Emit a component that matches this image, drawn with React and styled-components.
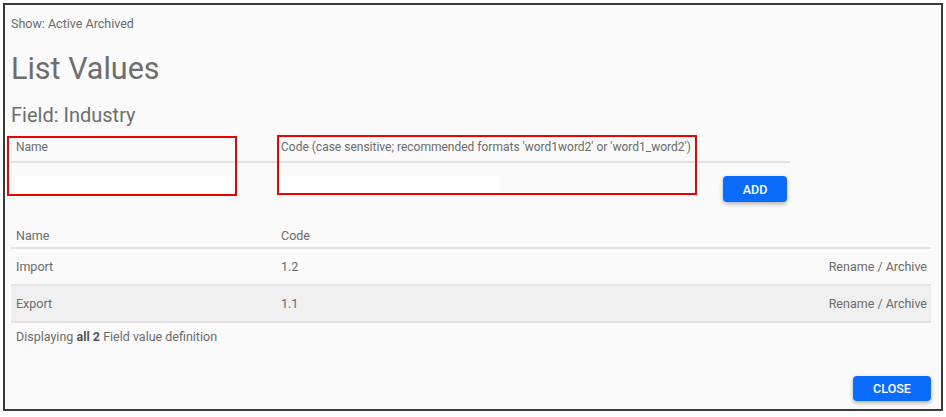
import React from 'react'
import styled, { createGlobalStyle } from 'styled-components'

const GlobalStyle = createGlobalStyle`
  body {
    margin: 0;
    background: #ffffff;
    font-family: Roboto, 'Liberation Sans', sans-serif;
  }
`

const Frame = styled.div`
  box-sizing: border-box;
  margin: 3px 0 0 3px;
  width: 940px;
  height: 408px;
  border: 2px solid #3a3a3a;
  background: #fafafa;
  padding: 11px 10px 8px 6px;
  display: flex;
  flex-direction: column;
  color: #6b6b6b;
  font-size: 12.5px;
`

const ShowLine = styled.div`
  line-height: 16px;
  font-size: 12.5px;
`

const Title = styled.h1`
  margin: 19px 0 0;
  font-size: 30.5px;
  font-weight: 400;
  line-height: 36px;
  color: #6e6e6e;
`

const SubTitle = styled.h2`
  margin: 16px 0 0;
  font-size: 20px;
  font-weight: 400;
  line-height: 24px;
  color: #6e6e6e;
`

const FormWrap = styled.div`
  position: relative;
  margin-top: 12px;
  width: 779px;
`

const LabelRow = styled.div`
  display: grid;
  grid-template-columns: 270px 1fr;
  line-height: 16px;
  font-size: 12px;
  padding-bottom: 6px;
  border-bottom: 2px solid #e2e2e2;
`

const Label = styled.div`
  padding-left: ${(p) => p.$indent || 0}px;
`

const InputRow = styled.div`
  display: flex;
  align-items: flex-start;
  margin-top: 13px;
`

const Input = styled.input`
  box-sizing: border-box;
  width: ${(p) => p.$width}px;
  height: 17px;
  margin-left: ${(p) => p.$left}px;
  border: none;
  background: #ffffff;
  outline: none;
`

const Button = styled.button`
  box-sizing: border-box;
  width: ${(p) => p.$width}px;
  height: 26px;
  border: none;
  border-radius: 4px;
  background: #0b6cfc;
  color: #ffffff;
  font-family: Roboto, 'Liberation Sans', sans-serif;
  font-size: 12.5px;
  font-weight: 500;
  text-transform: uppercase;
  box-shadow: 0 2px 4px rgba(0, 0, 0, 0.3);
  cursor: pointer;
`

const AddButton = styled(Button)`
  margin-left: auto;
  margin-right: 3px;
`

const Highlight = styled.div`
  position: absolute;
  box-sizing: border-box;
  left: ${(p) => p.$x}px;
  top: ${(p) => p.$y}px;
  width: ${(p) => p.$w}px;
  height: ${(p) => p.$h}px;
  border: 2px solid #ee0000;
  pointer-events: none;
`

const Table = styled.div`
  margin-top: 21px;
  width: 920px;
`

const Row = styled.div`
  display: grid;
  grid-template-columns: 270px 1fr auto;
  align-items: center;
  height: ${(p) => (p.$head ? 24 : 35)}px;
  border-bottom: 2px solid #e2e2e2;
  background: ${(p) => (p.$shade ? '#f0f0f0' : 'transparent')};
`

const Cell = styled.div`
  padding-left: ${(p) => (p.$first ? 5 : 0)}px;
  padding-right: ${(p) => (p.$end ? 4 : 0)}px;
`

const Summary = styled.div`
  margin-top: 6px;
  padding-left: 5px;
  line-height: 16px;

  b {
    font-weight: 700;
    color: #555;
  }
`

const Footer = styled.div`
  margin-top: auto;
  display: flex;
  justify-content: flex-end;
`

const CloseButton = styled(Button)`
  height: 25px;
`

const rows = [
  { name: 'Import', code: '1.2' },
  { name: 'Export', code: '1.1' },
]

const App = () => {
  return (
    <>
      <GlobalStyle />
      <Frame>
        <ShowLine>Show: Active Archived</ShowLine>
        <Title>List Values</Title>
        <SubTitle>Field: Industry</SubTitle>
        <FormWrap>
          <LabelRow>
            <Label $indent={5}>Name</Label>
            <Label>
              Code (case sensitive; recommended formats 'word1word2' or
              'word1_word2')
            </Label>
          </LabelRow>
          <InputRow>
            <Input $width={218} $left={4} />
            <Input $width={219} $left={48} />
            <AddButton $width={64}>Add</AddButton>
          </InputRow>
          <Highlight $x={-4} $y={-3} $w={230} $h={60} />
          <Highlight $x={266} $y={-4} $w={420} $h={60} />
        </FormWrap>
        <Table>
          <Row $head>
            <Cell $first>Name</Cell>
            <Cell>Code</Cell>
            <Cell $end />
          </Row>
          {rows.map((r, i) => (
            <Row key={r.name} $shade={i % 2 === 1}>
              <Cell $first>{r.name}</Cell>
              <Cell>{r.code}</Cell>
              <Cell $end>Rename / Archive</Cell>
            </Row>
          ))}
        </Table>
        <Summary>
          Displaying <b>all 2</b> Field value definition
        </Summary>
        <Footer>
          <CloseButton $width={78}>Close</CloseButton>
        </Footer>
      </Frame>
    </>
  )
}

export default App
